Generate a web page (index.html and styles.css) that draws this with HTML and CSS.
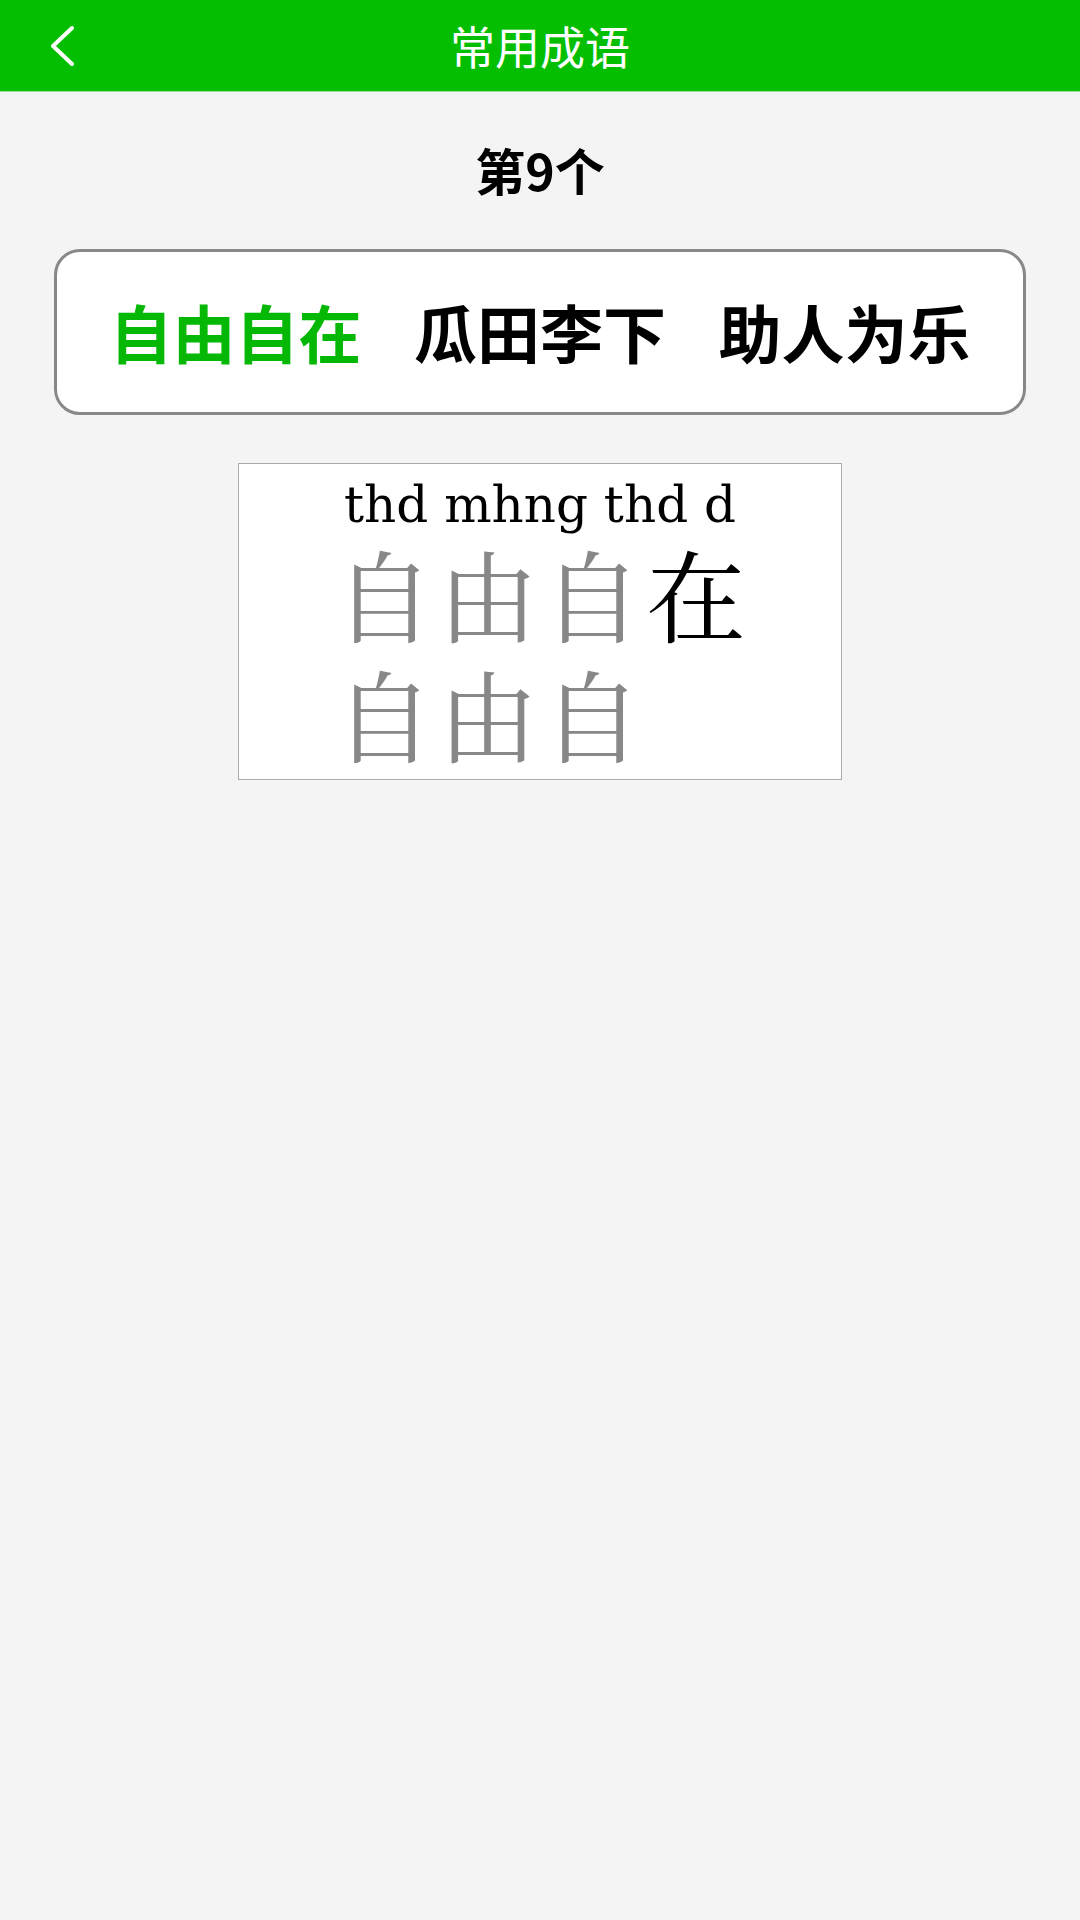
FILE: index.html
```html
<!DOCTYPE html>
<html lang="zh">
<head>
<meta charset="utf-8">
<title>常用成语</title>
<link rel="stylesheet" href="styles.css">
</head>
<body>
<header class="topbar">
  <div class="back">
    <svg width="32" height="46" viewBox="0 0 32 46"><path d="M25 5 L6 23 L25 41" fill="none" stroke="#fff" stroke-width="4" stroke-linecap="round" stroke-linejoin="round"/></svg>
  </div>
  <h1 class="title">常用成语</h1>
  <div></div>
</header>
<main class="content">
  <div class="count">第9个</div>
  <div class="idioms">
    <span class="idiom active">自由自在</span>
    <span class="idiom">瓜田李下</span>
    <span class="idiom">助人为乐</span>
  </div>
  <div class="practice">
    <div class="pinyin">thd mhng thd d</div>
    <div class="grid">
      <span class="ch done">自</span><span class="ch done">由</span><span class="ch done">自</span><span class="ch cur">在</span>
      <span class="ch done">自</span><span class="ch done">由</span><span class="ch done">自</span>
    </div>
  </div>
</main>
</body>
</html>
```
FILE: styles.css
```css
html, body {
  margin: 0;
  padding: 0;
}
body {
  width: 1080px;
  min-height: 1920px;
  background: #f4f4f4;
  font-family: "Noto Sans CJK SC", "Noto Sans", sans-serif;
  color: #000;
}
.topbar {
  height: 92px;
  background: #04be02;
  display: grid;
  grid-template-columns: 1fr auto 1fr;
  align-items: center;
  border-bottom: 1px solid #9be39a;
  box-sizing: border-box;
}
.back {
  padding-left: 47px;
  display: flex;
  align-items: center;
}
.back svg { display: block; }
.title {
  margin: 0;
  font-size: 45px;
  font-weight: 400;
  color: #fff;
  line-height: 92px;
}
.content {
  display: flex;
  flex-direction: column;
  align-items: center;
}
.count {
  margin-top: 47px;
  height: 60px;
  line-height: 60px;
  font-size: 50px;
  font-weight: 700;
}
.idioms {
  margin-top: 50px;
  width: 972px;
  height: 166px;
  box-sizing: border-box;
  background: #fff;
  border: 3px solid #888;
  border-radius: 26px;
  display: flex;
  align-items: center;
  justify-content: space-evenly;
  padding-bottom: 4px;
}
.idiom {
  font-size: 63px;
  font-weight: 700;
  line-height: 1;
}
.idiom.active { color: #06b806; }
.practice {
  margin-top: 48px;
  width: 604px;
  height: 317px;
  box-sizing: border-box;
  background: #fff;
  border: 1px solid #aaa;
  display: flex;
  flex-direction: column;
  align-items: center;
}
.pinyin {
  font-family: "DejaVu Serif", "Liberation Serif", serif;
  font-size: 50px;
  line-height: 54px;
  margin-top: 14px;
}
.grid {
  display: grid;
  grid-template-columns: repeat(4, 104px);
  grid-auto-rows: 120px;
}
.ch {
  font-family: "Noto Serif CJK SC", "Noto Sans CJK SC", serif;
  font-size: 100px;
  line-height: 120px;
  text-align: center;
  font-weight: 400;
}
.ch.done { color: #888; }
.ch.cur { color: #000; }
```
